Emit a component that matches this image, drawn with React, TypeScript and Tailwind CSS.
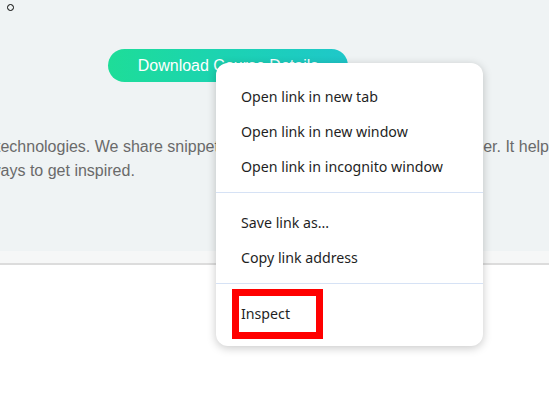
import { Fragment } from "react";

const groups = [
  ["Open link in new tab", "Open link in new window", "Open link in incognito window"],
  ["Save link as...", "Copy link address"],
];

export default function App() {
  return (
    <div className="relative w-[549px] h-[404px] overflow-hidden bg-white" style={{ fontFamily: '"Liberation Sans", Arial, sans-serif' }}>
      {/* page behind the menu */}
      <section className="h-[251px] bg-[#eff3f4] flex flex-col">
        <div className="h-[49px] pl-[7px] pt-[4px]">
          <div className="w-[7px] h-[7px] rounded-full border border-black" />
        </div>
        <button className="ml-[108px] w-[240px] h-[33px] rounded-full bg-gradient-to-r from-[#1edd98] to-[#1fc7ca] text-white text-[16px] leading-[33px] text-center">
          Download Course Details
        </button>
        <div className="mt-[53px] text-[16px] leading-[24px] text-[#6a6a6a] whitespace-nowrap">
          <div className="flex justify-between">
            <span className="-ml-[4px]">technologies. We share snippets of code for the web</span>
            <span className="-mr-[8px]">er. It helps</span>
          </div>
          <div className="-ml-[11px]">ways to get inspired.</div>
        </div>
      </section>
      <div className="h-[12px] bg-[#f6f7f7]" />
      <div className="h-[2px] bg-[#dcdcdc]" />

      {/* context menu */}
      <div
        className="absolute left-[216px] top-[63px] w-[267px] rounded-[12px] bg-white pt-4 pb-[15px] shadow-[0_2px_10px_rgba(0,0,0,0.22)] text-[14.2px] text-[#1f1f1f]"
        style={{ fontFamily: '"Segoe UI", "Noto Sans", sans-serif' }}
      >
        {groups.map((items, gi) => (
          <Fragment key={gi}>
            {items.map((label) => (
              <div key={label} className="h-[35px] flex items-center pl-[25px]">
                {label}
              </div>
            ))}
            <div className="mt-2 mb-3 h-px bg-[#d6e2f5]" />
          </Fragment>
        ))}
        <div className="relative h-[35px] flex items-center pl-[25px]">
          Inspect
          <div className="absolute left-[16px] -top-[7px] w-[91px] h-[50px] border-[7px] border-[#ff0000]" />
        </div>
      </div>
    </div>
  );
}
